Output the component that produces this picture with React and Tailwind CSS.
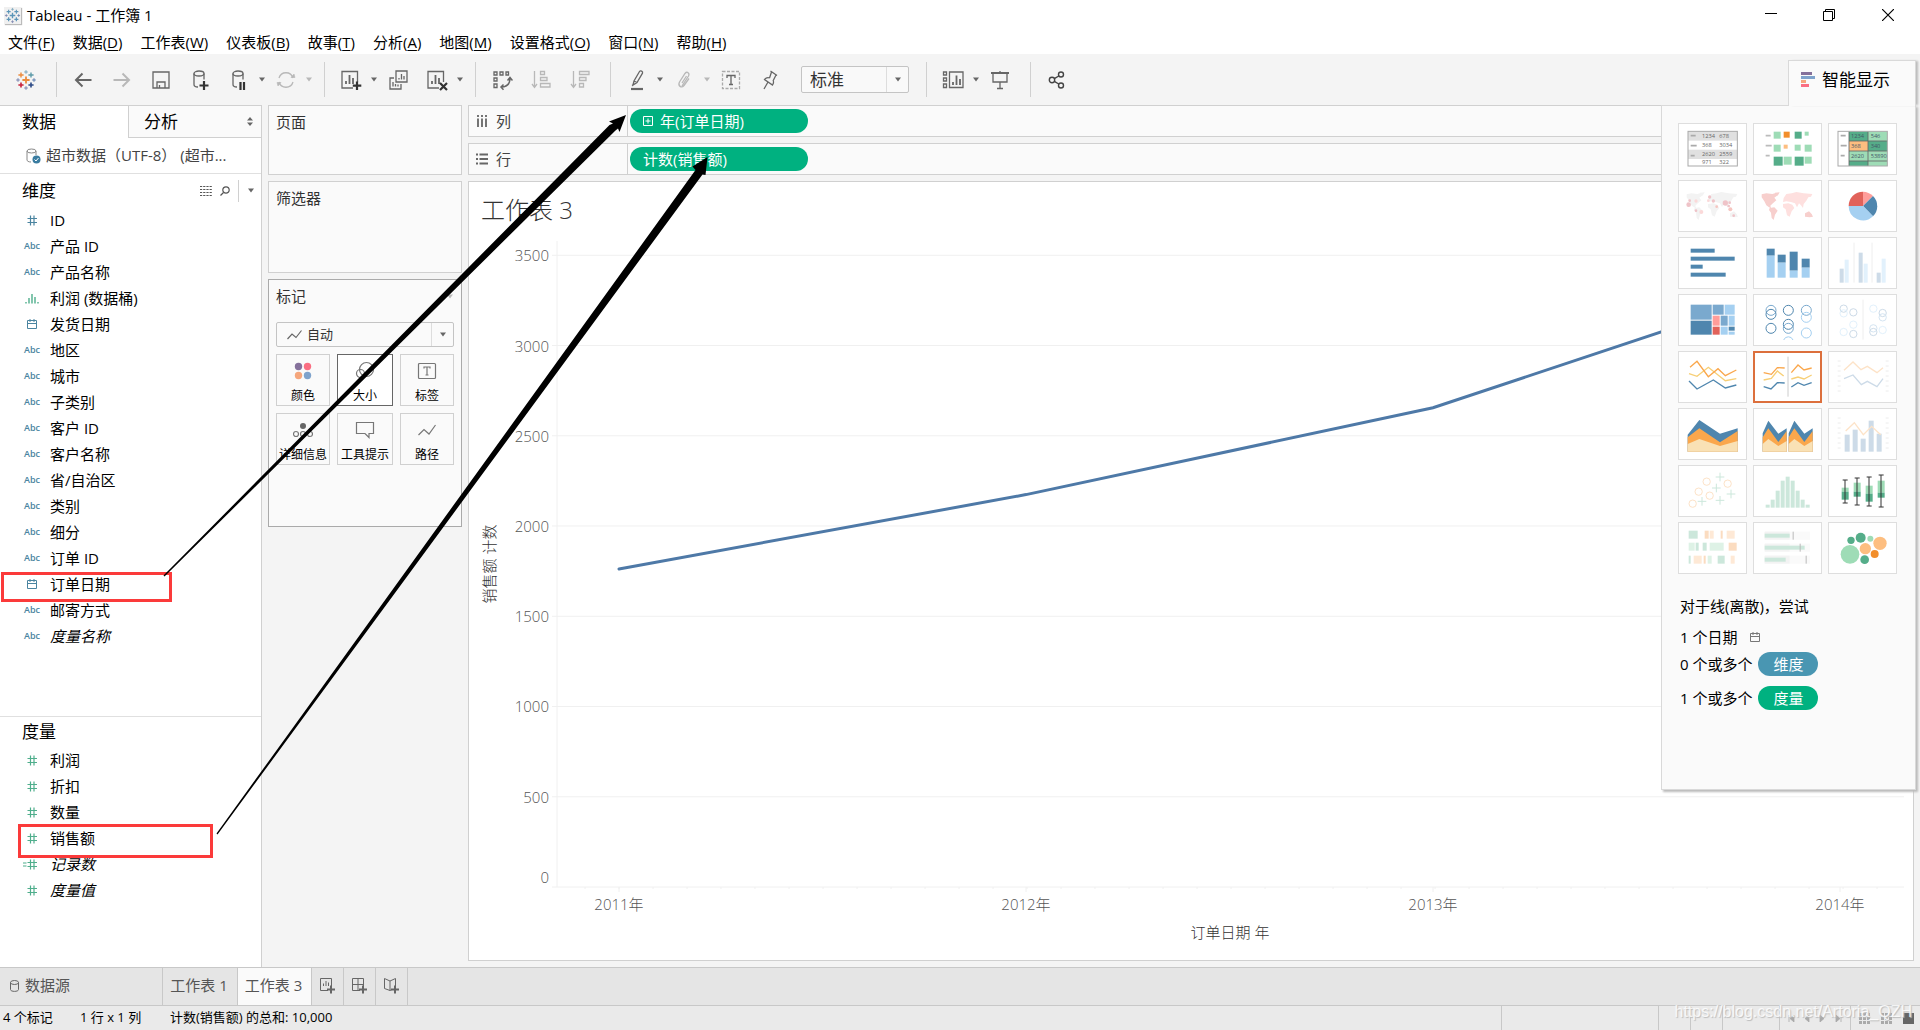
const menus = [
    ["文件", "F"], ["数据", "D"], ["工作表", "W"], ["仪表板", "B"], ["故事", "T"],
    ["分析", "A"], ["地图", "M"], ["设置格式", "O"], ["窗口", "N"], ["帮助", "H"],
];

const dimensions = [
    { type: "num", name: "ID" },
    { type: "abc", name: "产品 ID" },
    { type: "abc", name: "产品名称" },
    { type: "bin", name: "利润 (数据桶)" },
    { type: "date", name: "发货日期" },
    { type: "abc", name: "地区" },
    { type: "abc", name: "城市" },
    { type: "abc", name: "子类别" },
    { type: "abc", name: "客户 ID" },
    { type: "abc", name: "客户名称" },
    { type: "abc", name: "省/自治区" },
    { type: "abc", name: "类别" },
    { type: "abc", name: "细分" },
    { type: "abc", name: "订单 ID" },
    { type: "date", name: "订单日期" },
    { type: "abc", name: "邮寄方式" },
    { type: "abc", name: "度量名称", italic: true },
];

const measures = [
    { type: "num", name: "利润" },
    { type: "num", name: "折扣" },
    { type: "num", name: "数量" },
    { type: "num", name: "销售额" },
    { type: "calc", name: "记录数", italic: true },
    { type: "num", name: "度量值", italic: true },
];

/* ---------- small helpers ---------- */

const Caret = ({ className = "text-[#666]" }) => (
    <svg className={`${className} shrink-0`} width="8" height="5" viewBox="0 0 8 5">
        <path d="M1 0.5h6L4 4.5z" fill="currentColor" />
    </svg>
);

const ToolButton = ({ label, dim, children }) => (
    <button
        type="button"
        aria-label={label}
        className={`flex w-[39px] shrink-0 items-center justify-center ${dim ? "text-[#b8b8b8]" : "text-[#666]"}`}
    >
        <svg width="22" height="22" viewBox="0 0 22 22" fill="none" stroke="currentColor" strokeWidth="1.3">
            {children}
        </svg>
    </button>
);

const Separator = () => <span className="mr-1.5 ml-[11px] h-[35px] w-px shrink-0 bg-[#d0d0d0]" />;

const Plus = ({ x, y, r, c, w = 1.4 }) => (
    <path d={`M${x - r} ${y}h${r * 2}M${x} ${y - r}v${r * 2}`} stroke={c} strokeWidth={w} fill="none" />
);

const Logo = ({ blue }) => (
    <>
        <Plus x={11} y={11} r={3.6} c={blue ? "#5b95b8" : "#eb8a3c"} w={1.8} />
        <Plus x={6} y={6} r={2.6} c={blue ? "#5b95b8" : "#eb8a3c"} />
        <Plus x={16} y={6} r={2.6} c={blue ? "#5b95b8" : "#5c9aa8"} />
        <Plus x={6} y={16} r={2.6} c={blue ? "#5b95b8" : "#c8233d"} w={1.6} />
        <Plus x={16} y={16} r={2.6} c={blue ? "#5b95b8" : "#2c4a86"} w={1.6} />
        <Plus x={11} y={3} r={1.8} c="#7ba6bd" w={1} />
        <Plus x={11} y={19} r={1.8} c="#7b85b0" w={1} />
        <Plus x={3} y={11} r={1.8} c="#7b85b0" w={1} />
        <Plus x={19} y={11} r={1.8} c="#5f7fae" w={1} />
    </>
);

const SheetIcon = () => (
    <>
        <path d="M13 19H2V2.5h15.5V13" />
        <path d="M6 15v-3M9.5 15V6M13 15V9" strokeWidth="1.8" />
    </>
);

const Cylinder = () => (
    <>
        <ellipse cx="10" cy="4.5" rx="5" ry="2.5" />
        <path d="M5 4.5v11c0 1.5 1.8 2.5 4 2.5M15 4.5v6" />
    </>
);

/* ---------- toolbar ---------- */

const Toolbar = () => (
    <div className="flex h-[51px] items-center bg-[#f4f4f4] pl-1.5">
        <ToolButton label="起始页"><Logo /></ToolButton>
        <Separator />
        <ToolButton label="撤消"><path d="M19.5 11H4M10.5 4.500L4 11l6.500 6.500" strokeWidth="2" /></ToolButton>
        <ToolButton label="重做" dim><path d="M2.500 11H18M11.500 4.500L18 11l-6.500 6.500" strokeWidth="2" /></ToolButton>
        <ToolButton label="保存">
            <path d="M3 3h16v16H3zM7 19v-6h8v6M9.500 19v-3" />
        </ToolButton>
        <ToolButton label="新建数据源">
            <Cylinder />
            <path d="M15 12v9M10.500 16.500h9" stroke="#333" strokeWidth="2.200" />
        </ToolButton>
        <ToolButton label="暂停自动更新">
            <Cylinder />
            <path d="M12.500 13v8M16 13v8" stroke="#333" strokeWidth="2.200" />
        </ToolButton>
        <Caret />
        <ToolButton label="运行更新" dim>
            <path d="M4 9a7.300 7.300 0 0 1 14 0M18 13a7.300 7.300 0 0 1-14 0" />
            <path d="M16 8.500h4L19 5zM6 13.500H2L3 17z" fill="currentColor" strokeWidth="0.600" />
        </ToolButton>
        <Caret className="text-[#b8b8b8]" />
        <Separator />
        <ToolButton label="新建工作表">
            <SheetIcon />
            <path d="M17 12.500v8.500M12.800 16.700h8.500" stroke="#333" strokeWidth="2.200" />
        </ToolButton>
        <Caret />
        <ToolButton label="复制工作表">
            <path d="M9 2h11v11H9z M7 9H3v11h11v-5" />
            <path d="M12 10.500V9M14.500 10.500V5M17 10.500V7M6 17.500V13M8.500 17.500V15M11 17.500V15.500" />
        </ToolButton>
        <ToolButton label="清除工作表">
            <SheetIcon />
            <path d="M14 14l7 7M21 14l-7 7" stroke="#333" strokeWidth="2.200" />
        </ToolButton>
        <Caret />
        <Separator />
        <ToolButton label="交换行和列">
            <path d="M3 3h3v3H3zM9 3h3v3H9zM15 3h2.500v3H15zM3 9h3v3H3zM3 15h3v3.500H3z" />
            <path d="M19 9c0 6-3 9-9 9M16.500 11.500L19 8.500l2.500 3M12.500 15.500L10 18l2.500 2.800" strokeWidth="1.500" />
        </ToolButton>
        <ToolButton label="升序排序" dim>
            <path d="M4.500 2v15M2 15l2.500 3.500L7 15" />
            <path d="M10.500 2.500h4v3h-4zM10.500 8.500h6.500v3h-6.500zM10.500 14.500h9.500v3.500h-9.500z" />
        </ToolButton>
        <ToolButton label="降序排序" dim>
            <path d="M4.500 2v15M2 15l2.500 3.500L7 15" />
            <path d="M10.500 2.500h9.500v3h-9.500zM10.500 8.500h6.500v3h-6.500zM10.500 14.500h4v3.500h-4z" />
        </ToolButton>
        <Separator />
        <ToolButton label="突出显示">
            <path d="M7 16l1-4 5.500-9.500c1-1.500 3.700 0 3 1.700L11 13.500zM8 12l3 1.500M6 16.500l1.500-1" />
            <path d="M5 20h12" strokeWidth="2.200" />
        </ToolButton>
        <Caret />
        <ToolButton label="组成员" dim>
            <path d="M9 17l6.500-10c1.500-3-1.500-5-3.500-2.500L6.500 13c-2 4 2 6.500 4.500 3.500l5-7M9 14l4.500-7" />
        </ToolButton>
        <Caret className="text-[#b8b8b8]" />
        <ToolButton label="显示标记标签">
            <rect x="2.500" y="2.500" width="17" height="17" stroke="#aaa" strokeDasharray="3 1.500" />
            <path d="M7 9V6.500h8V9M11 6.500v9M9 15.500h4" />
        </ToolButton>
        <ToolButton label="固定轴">
            <path d="M11.500 2l6.500 4.500M12.500 3L10.500 9M17 6L14 12M10.500 9c-1.500-1-4 0-5 1.500L13.500 16c1-1.500 1.500-3.500.500-4M9 13l-4 7" />
        </ToolButton>
        <div className="relative ml-3 h-[27px] w-[108px] shrink-0">
            <select
                aria-label="视图适合方式"
                className="h-full w-full appearance-none rounded-xs border border-[#c4c4c4] bg-[#f9f9f9] pl-2 text-[17px] leading-6 text-[#333]"
            >
                <option>标准</option>
                <option>整个视图</option>
            </select>
            <span className="pointer-events-none absolute inset-y-px right-px flex w-[22px] items-center justify-center border-l border-[#ddd]">
                <Caret />
            </span>
        </div>
        <span className="w-1.5" />
        <Separator />
        <ToolButton label="显示/隐藏卡">
            <path d="M1.500 3h3v3h-3zM1.500 9h3v3h-3zM1.500 15h3v3.500h-3zM7.500 3H21v15.500H7.500z" />
            <path d="M11 16v-3M14.500 16V6.500M18 16v-6" strokeWidth="1.800" />
        </ToolButton>
        <Caret />
        <ToolButton label="演示模式">
            <path d="M2 4h18" strokeWidth="2" />
            <path d="M4 4v9h14V4M11 2v2M11 13v6M8 19.500h6" />
        </ToolButton>
        <Separator />
        <ToolButton label="共享">
            <g stroke="#444" strokeWidth="1.400">
                <circle cx="6" cy="11" r="2.700" />
                <circle cx="15" cy="5.500" r="2.500" />
                <circle cx="15" cy="16.500" r="2.500" />
                <path d="M8.300 9.700l4.500-2.700M8.300 12.300l4.500 2.700" />
            </g>
        </ToolButton>
    </div>
);

/* ---------- data pane ---------- */

const CalendarIcon = ({ className }) => (
    <svg className={className} width="12" height="12" viewBox="0 0 12 12" fill="none" stroke="currentColor">
        <path d="M1.500 2.500h9v8h-9zM1 5.500h10M4 1v3M8 1v3" />
    </svg>
);

const FieldIcon = ({ type }) => {
    if (type === "abc") {
        return <span className="text-[9px] font-semibold text-[#4a84a0]">Abc</span>;
    }
    if (type === "date") return <CalendarIcon className="text-[#4a84a0]" />;
    if (type === "bin") {
        return (
            <svg width="14" height="11" viewBox="0 0 14 11" stroke="#4fae8c" strokeWidth="1.400">
                <path d="M1 10.500V9M4 10.500V5M7 10.500V1M10 10.500V4M13 10.500V9" />
            </svg>
        );
    }
    return (
        <svg width="18" height="11" viewBox="0 0 18 11" fill="none" strokeWidth="1.200" stroke="currentColor">
            <path d="M7.500 0.500v10M11 0.500v10M4.500 3.500h9.500M4.500 7.500h9.500" />
            {type === "calc" && <path d="M0 4h3.500M0 7h3.500" />}
        </svg>
    );
};

const FieldList = ({ items, iconClass }) => (
    <ul>
        {items.map((f) => (
            <li key={f.name} className="flex h-[26px] items-center text-[15px] text-black">
                <span className={`flex w-[50px] justify-center pl-3.5 ${iconClass}`}>
                    <span className="flex w-5 justify-center"><FieldIcon type={f.type} /></span>
                </span>
                <span className={f.italic ? "italic" : ""}>{f.name}</span>
            </li>
        ))}
    </ul>
);

const DataPane = () => (
    <aside className="flex w-[262px] shrink-0 flex-col border-t border-r border-[#d0d0d0] bg-white">
        <div className="flex h-8 text-[17px] text-black">
            <button type="button" className="w-[128px] pl-[22px] text-left">数据</button>
            <button type="button" className="flex flex-1 items-center justify-between border-b border-l border-[#d0d0d0] bg-[#fafafa] pr-2 pl-[15px]">
                分析
                <svg width="6" height="9" viewBox="0 0 6 9" fill="#666"><path d="M0 3.500h6L3 0zM0 5.500h6L3 9z" /></svg>
            </button>
        </div>
        <button type="button" className="flex h-9 items-center gap-[5px] border-b border-[#e0e0e0] pl-[26px] text-[15px] whitespace-pre text-[#444]">
            <svg width="15" height="16" viewBox="0 0 15 16" fill="none" stroke="#888">
                <ellipse cx="5.500" cy="3" rx="4.500" ry="2" />
                <path d="M1 3v9c0 1 1.500 2 4 2M10 3v4" />
                <circle cx="10.500" cy="11.500" r="4" fill="#3a7ca0" stroke="none" />
                <path d="M8.500 11.500l1.500 1.500 2.500-3" stroke="#fff" />
            </svg>
            超市数据（UTF-8） (超市...
        </button>
        <div className="flex h-[33px] items-center pl-[22px]">
            <h2 className="flex-1 text-[17px] text-black">维度</h2>
            <button type="button" aria-label="查看数据" className="mr-2">
                <svg width="12" height="10" viewBox="0 0 12 10" stroke="#555">
                    <path d="M0 .5h12M0 3.500h12M0 6.500h12M0 9.500h12" strokeDasharray="2.200 1" />
                </svg>
            </button>
            <button type="button" aria-label="查找字段" className="mr-2">
                <svg width="10" height="10" viewBox="0 0 10 10" fill="none" stroke="#555" strokeWidth="1.200">
                    <circle cx="6" cy="4" r="3.200" /><path d="M3.500 6.500L.5 9.500" />
                </svg>
            </button>
            <button type="button" aria-label="维度菜单" className="flex h-[22px] items-center border-l border-[#d0d0d0] pr-1.5 pl-2"><Caret /></button>
        </div>
        <div className="h-[510px] border-b border-[#e0e0e0]">
            <FieldList items={dimensions} iconClass="text-[#4a84a0]" />
        </div>
        <h2 className="flex h-[30px] items-center pl-[22px] text-[17px] text-black">度量</h2>
        <FieldList items={measures} iconClass="text-[#4fae8c]" />
    </aside>
);

/* ---------- cards ---------- */

const markButtons = [
    {
        name: "颜色",
        icon: (
            <g stroke="none">
                <circle cx="5.500" cy="5.500" r="3.700" fill="#85719b" />
                <circle cx="14.500" cy="5.500" r="3.700" fill="#fa6e82" />
                <circle cx="5.500" cy="14.500" r="3.700" fill="#f5a67c" />
                <circle cx="14.500" cy="14.500" r="3.700" fill="#7fa3cc" />
            </g>
        ),
    },
    {
        name: "大小",
        active: true,
        icon: <><circle cx="11.500" cy="8.500" r="7" /><circle cx="5.500" cy="12.500" r="4" /></>,
    },
    {
        name: "标签",
        icon: <><rect x="1.500" y="2.500" width="17" height="15" rx="1" /><path d="M7 7.500V6h6v1.500M10 6v8M8.500 14h3" /></>,
    },
    {
        name: "详细信息",
        icon: (
            <>
                <circle cx="10" cy="6" r="3" fill="#666" stroke="none" />
                <circle cx="3" cy="14" r="2.500" /><circle cx="10" cy="14" r="2.500" /><circle cx="17" cy="14" r="2.500" />
            </>
        ),
    },
    { name: "工具提示", icon: <path d="M1.500 2.500h17v11H14v4l-4-4H1.500z" /> },
    { name: "路径", icon: <path d="M1.500 15l5.500-5.500 5 4.500 6.500-9" /> },
];

const Cards = () => (
    <div className="flex w-[194px] shrink-0 flex-col gap-1.5 text-[15px] text-[#333]">
        <section className="h-[70px] border border-[#d0d0d0] bg-[#fafafa] px-[7px] py-[5px]"><h3>页面</h3></section>
        <section className="h-[92px] border border-[#d0d0d0] bg-[#fafafa] px-[7px] py-[5px]"><h3>筛选器</h3></section>
        <section className="h-[248px] border border-[#aaa] bg-[#fafafa] px-[7px] py-[5px]">
            <div className="flex items-center justify-between">
                <h3>标记</h3>
                <Caret className="text-[#bbb]" />
            </div>
            <div className="relative mt-3.5">
                <select
                    aria-label="标记类型"
                    className="h-[25px] w-full appearance-none rounded-xs border border-[#c4c4c4] bg-[#fafafa] pl-[30px] text-[13px] text-[#333]"
                >
                    <option>自动</option>
                    <option>线</option>
                </select>
                <svg className="pointer-events-none absolute top-2 left-[11px]" width="15" height="10" viewBox="0 0 15 10" fill="none" stroke="#666" strokeWidth="1.200">
                    <path d="M.5 9l4.500-5 4 3.500L14.500.5" />
                </svg>
                <span className="pointer-events-none absolute inset-y-px right-px flex w-[22px] items-center justify-center border-l border-[#ddd]">
                    <Caret />
                </span>
            </div>
            <div className="mt-[7px] grid grid-cols-[54px_56px_54px] justify-between gap-y-[7px]">
                {markButtons.map((m) => (
                    <button
                        key={m.name}
                        type="button"
                        className={`flex h-[52px] flex-col items-center justify-between border pt-1.5 text-[12px] leading-[18px] whitespace-nowrap text-black ${m.active ? "border-[#666] bg-white" : "border-[#d0d0d0] bg-[#fafafa]"}`}
                    >
                        <svg width="20" height="20" viewBox="0 0 20 20" fill="none" stroke="#777" strokeWidth="1.200">{m.icon}</svg>
                        {m.name}
                    </button>
                ))}
            </div>
        </section>
    </div>
);

/* ---------- shelves and chart ---------- */

const Shelf = ({ name, icon, children }) => (
    <div className="flex h-8 border border-[#d0d0d0] bg-[#fafafa]">
        <div className="flex w-[159px] items-center gap-2 border-r border-[#d0d0d0] pl-[7px] text-[15px] text-[#444]">
            <svg width="12" height="12" viewBox="0 0 12 12" stroke="#666" strokeWidth="1.800">{icon}</svg>
            {name}
        </div>
        <button type="button" className="my-[3px] ml-[2px] flex h-6 w-[178px] items-center gap-[7px] rounded-full bg-[#00b180] pl-[13px] text-[15px] text-white">
            {children}
        </button>
    </div>
);

const W = 1444;
const H = 723;
const px = (x) => `${(x / W) * 100}%`;
const py = (y) => `${(y / H) * 100}%`;
const base = 650;
const valueY = (v) => base - v * 0.1805;
const yearX = (i) => 150 + i * 407;

const points = [1762, 2174, 2655, 3405];
const ticks = Array.from({ length: 39 }, (_, i) => 116 + i * 34).filter((x) => x < 1435);

const Chart = () => (
    <svg className="min-h-0 w-full flex-1 font-['Open_Sans','Noto_Sans_CJK_SC',sans-serif] text-[15px] font-light" role="img" aria-label="销售额 计数">
        <g stroke="#f0f0f0">
            {[500, 1000, 1500, 2000, 2500, 3000, 3500].map((v) => (
                <line key={v} x1={px(83)} x2={px(1435)} y1={py(valueY(v))} y2={py(valueY(v))} />
            ))}
            <line x1={px(83)} x2={px(1435)} y1={py(base)} y2={py(base)} />
            <line x1={px(88)} x2={px(88)} y1={py(4)} y2={py(base)} />
            {ticks.map((x) => (
                <line key={x} x1={px(x)} x2={px(x)} y1={py(base)} y2={py(base + 2)} />
            ))}
            {points.map((_, i) => (
                <line key={i} x1={px(yearX(i))} x2={px(yearX(i))} y1={py(base)} y2={py(base + 5)} />
            ))}
        </g>
        <g fill="#555" textAnchor="end">
            {[500, 1000, 1500, 2000, 2500, 3000, 3500].map((v) => (
                <text key={v} x={px(80)} y={py(valueY(v) + 6)}>{v}</text>
            ))}
            <text x={px(80)} y={py(646)}>0</text>
        </g>
        <g fill="#555" textAnchor="middle">
            {points.map((_, i) => (
                <text key={i} x={px(yearX(i))} y={py(673)}>{2011 + i}年</text>
            ))}
        </g>
        <text x={px(761)} y={py(701)} textAnchor="middle" fill="#333">订单日期 年</text>
        <svg x={px(26)} y={py(327)} overflow="visible">
            <text transform="rotate(-90)" textAnchor="middle" fill="#333">销售额 计数</text>
        </svg>
        <svg viewBox={`0 0 ${W} ${H}`} preserveAspectRatio="none" width="100%" height="100%">
            <polyline
                points={points.map((v, i) => `${yearX(i)},${valueY(v)}`).join(" ")}
                fill="none"
                stroke="#4e79a7"
                strokeWidth="3"
                strokeLinecap="round"
                vectorEffect="non-scaling-stroke"
            />
        </svg>
    </svg>
);

const Worksheet = () => (
    <main className="flex min-w-0 flex-1 flex-col gap-1.5">
        <Shelf name="列" icon={<path d="M2 3.500V12M6 3.500V12M10 3.500V12M2 0v2M6 0v2M10 0v2" />}>
            <svg width="10" height="10" viewBox="0 0 10 10" fill="none" stroke="#fff"><path d="M.5.5h9v9h-9zM2.500 5h5M5 2.500v5" /></svg>
            年(订单日期)
        </Shelf>
        <Shelf name="行" icon={<path d="M3.500 1.500H12M3.500 6H12M3.500 10.500H12M0 1.500h2M0 6h2M0 10.500h2" />}>计数(销售额)</Shelf>
        <section className="flex flex-1 flex-col border border-[#d0d0d0] bg-white">
            <h1 className="h-[55px] pt-2.5 pl-3 font-['Open_Sans','Noto_Sans_CJK_SC',sans-serif] text-[24px] leading-9 font-light text-[#333]">工作表 3</h1>
            <Chart />
        </section>
    </main>
);

/* ---------- show me ---------- */

const R = ({ x, y, w, h, c }) => <rect x={x} y={y} width={w} height={h} fill={c} />;
const L = ({ p, c, w = 4 }) => <polyline points={p} stroke={c} strokeWidth={w} fill="none" />;
const Rings = ({ list, r = 15 }) => list.map(([cx, cy, c]) => (
    <circle key={`${cx}-${cy}`} cx={cx} cy={cy} r={r} fill="none" stroke={c} strokeWidth="3" />
));

const navy = "#4f86ae";
const mid = "#7aa9ce";
const sky = "#a5d0f1";
const green = "#55ad89";
const mint = "#9edcb6";
const orange = "#faa74c";
const peach = "#fdbe80";

const World = ({ west, east }) => (
    <>
        <path fill={west} d="M26 43l14-3 18 2 10-3 4 8-8 6 6 8-12 10-6 6 2 8-6-3-8-6-6-12-8-12zM66 38l14-1-6 10-8-3zM50 84l14-2 10 10-8 12-4 16-6-6-2-16-6-8z" />
        <path fill={east} d="M92 54l8-12 16-2 14-4 22 4 26 2-4 8-8 2-6 10-8 10-2 12-6-8-6-6-6 12-6-12-12-4-14-2-10 2zM90 72l16-2 12 4 6 10-8 10-6 16-8-4-4-18-8-6z" />
        <path fill={west} d="M156 100l12-6 8 8 4 8-10 2-14-2z" />
    </>
);

const Areas = ({ b, o, y }) => (
    <>
        <polygon points={b} fill={navy} />
        <polygon points={o} fill={orange} />
        <polygon points={y} fill="#f9e1b5" />
    </>
);

const SideTicks = () => (
    <path d="M29 30h9M29 45h9M29 60h9M29 75h9M29 90h9M29 105h9M29 120h9M173 30h9M173 45h9M173 60h9M173 75h9M173 90h9M173 105h9M173 120h9" stroke="#ececec" strokeWidth="3" />
);

const thumbs = [
    {
        name: "文本表",
        art: (
            <>
                <rect x="30" y="25" width="148" height="104" fill="#fff" />
                <R x={30} y={25} w={148} h={28} c="#e0e0e0" />
                <R x={30} y={80} w={148} h={28} c="#e0e0e0" />
                <rect x="30" y="25" width="148" height="104" fill="none" stroke="#a9a9a9" strokeWidth="3" />
                <path d="M38 38h15M38 68h18M38 98h12" stroke="#aaa" strokeWidth="5" />
                <g fill="#666" fontSize="17">
                    <text x="72" y="45">1234</text><text x="124" y="45">678</text>
                    <text x="72" y="73">368</text><text x="124" y="73">3034</text>
                    <text x="72" y="100">2620</text><text x="124" y="100">2559</text>
                    <text x="72" y="124">971</text><text x="124" y="124">322</text>
                </g>
            </>
        ),
    },
    {
        name: "压力图",
        art: (
            <>
                <path d="M38 38h15M38 68h18M38 98h12" stroke="#bbb" strokeWidth="5" />
                <R x={62} y={26} w={21} h={21} c={mint} /><R x={92} y={26} w={18} h={18} c="#f28e2b" />
                <R x={125} y={26} w={21} h={21} c={green} /><R x={155} y={26} w={12} h={12} c={mint} />
                <R x={62} y={65} w={21} h={21} c={mint} /><R x={92} y={65} w={12} h={12} c={peach} />
                <R x={125} y={65} w={18} h={18} c={mint} /><R x={155} y={65} w={21} h={21} c={mint} />
                <R x={62} y={101} w={27} h={27} c={green} /><R x={92} y={101} w={24} h={24} c={mint} />
                <R x={125} y={101} w={27} h={27} c={green} /><R x={155} y={101} w={21} h={21} c={mint} />
            </>
        ),
    },
    {
        name: "突出显示表",
        art: (
            <>
                <R x={30} y={25} w={148} h={104} c="#fff" />
                <R x={63} y={25} w={57} h={29} c={green} /><R x={120} y={25} w={58} h={29} c={mint} />
                <R x={63} y={54} w={57} h={30} c={peach} /><R x={120} y={54} w={58} h={30} c={green} />
                <R x={63} y={84} w={115} h={30} c={mint} />
                <R x={63} y={114} w={57} h={15} c={green} /><R x={120} y={114} w={58} h={15} c={mint} />
                <path d="M63 25v104M120 25v104M63 54h115M63 84h115M63 114h115" stroke="#666" strokeWidth="2.500" />
                <rect x="30" y="25" width="148" height="104" fill="none" stroke="#aaa" strokeWidth="3" />
                <path d="M38 38h15M38 68h18M38 98h12" stroke="#aaa" strokeWidth="5" />
                <g fill="#456" fontSize="17">
                    <text x="69" y="44">1234</text><text x="128" y="44">546</text>
                    <text x="69" y="75">368</text><text x="128" y="75">340</text>
                    <text x="69" y="105">2620</text><text x="128" y="105">53890</text>
                </g>
            </>
        ),
    },
    {
        name: "符号地图",
        art: (
            <>
                <World west="#f3f3f3" east="#f3f3f3" />
                <g fill="#efc3c8">
                    <circle cx="32" cy="74" r="7" /><circle cx="35" cy="62" r="4" /><circle cx="54" cy="63" r="5" fill="#fbd9d9" />
                    <circle cx="95" cy="51" r="5" /><circle cx="106" cy="63" r="5" /><circle cx="91" cy="62" r="4" fill="#fbd9d9" />
                    <circle cx="142" cy="69" r="8" /><circle cx="155" cy="68" r="4" /><circle cx="152" cy="78" r="4" />
                    <circle cx="157" cy="88" r="6" fill="#f6c5c0" /><circle cx="54" cy="92" r="4" /><circle cx="70" cy="96" r="6" fill="#fbd9d9" />
                    <circle cx="116" cy="80" r="4" fill="#f6c5c0" /><circle cx="167" cy="107" r="4" />
                </g>
            </>
        ),
    },
    { name: "地图", art: <World west="#f7cfcd" east="#fee0df" /> },
    {
        name: "饼图",
        art: (
            <>
                <path d="M105 78V35a43 43 0 0 1 30 13z" fill="#ff9d9a" />
                <path d="M105 78l30-30a43 43 0 0 1 0 61z" fill={navy} />
                <path d="M105 78l30 31A43 43 0 0 1 62 78z" fill={sky} />
                <path d="M105 78H62a43 43 0 0 1 43-43z" fill="#e1625a" />
            </>
        ),
    },
    {
        name: "水平条",
        art: <><R x={38} y={35} w={72} h={12} c={navy} /><R x={38} y={59} w={132} h={12} c={navy} /><R x={38} y={83} w={36} h={12} c={navy} /><R x={38} y={107} w={105} h={12} c={navy} /></>,
    },
    {
        name: "堆叠条",
        art: [[41, 35, 56], [74, 53, 77], [110, 44, 101], [146, 65, 92]].map(([x, a, b]) => (
            <g key={x}><R x={x} y={a} w={24} h={b - a} c={navy} /><R x={x} y={b} w={24} h={122 - b} c={sky} /></g>
        )),
    },
    {
        name: "并排条",
        art: (
            <>
                <path d="M78 17v120M132 17v120" stroke="#eee" strokeWidth="3" />
                {[[35, 95], [92, 47], [146, 107]].map(([x, y]) => <R key={x} x={x} y={y} w={12} h={137 - y} c="#cddbe8" />)}
                {[[50, 68], [107, 80], [161, 65]].map(([x, y]) => <R key={x} x={x} y={y} w={12} h={137 - y} c="#e2f1fc" />)}
            </>
        ),
    },
    {
        name: "树状图",
        art: (
            <>
                <R x={38} y={32} w={63} h={45} c={mid} /><R x={38} y={80} w={63} h={42} c={navy} />
                <R x={104} y={32} w={33} h={30} c={mid} /><R x={140} y={32} w={30} h={30} c={sky} />
                <R x={104} y={65} w={21} h={30} c="#ff9d9a" /><R x={128} y={65} w={21} h={30} c={mid} /><R x={152} y={65} w={18} h={30} c={sky} />
                <R x={104} y={98} w={21} h={24} c="#e1625a" /><R x={128} y={98} w={21} h={24} c={sky} />
                <R x={152} y={98} w={18} h={12} c={navy} /><R x={152} y={113} w={18} h={9} c={sky} />
            </>
        ),
    },
    {
        name: "圆视图",
        art: (
            <>
                <Rings list={[[54, 49, mid], [54, 61, navy], [54, 103, navy], [106, 49, navy], [106, 91, navy], [106, 103, mid], [160, 49, mid], [160, 70, sky], [160, 117, sky]]} />
                <path d="M92 138a15 15 0 0 1 28 0" fill="none" stroke={sky} strokeWidth="3" />
            </>
        ),
    },
    {
        name: "并排圆",
        art: (
            <>
                <path d="M105 17v120" stroke="#eee" strokeWidth="3" />
                <Rings r={11} list={[[47, 44, "#cddbe8"], [47, 58, "#e2f1fc"], [76, 55, "#cddbe8"], [76, 92, "#e2f1fc"], [47, 114, "#e2f1fc"], [76, 120, "#cddbe8"], [136, 44, "#e2f1fc"], [164, 57, "#cddbe8"], [164, 70, "#d5e5f2"], [136, 103, "#d5e5f2"], [136, 114, "#cddbe8"], [164, 108, "#e2f1fc"]]} />
            </>
        ),
    },
    {
        name: "线(连续)",
        art: <><L p="33,68 57,76 91,49 142,89 175,83" c="#f7cf76" /><L p="36,49 57,31 91,77 120,53 142,74 175,57" c={orange} /><L p="33,90 57,114 106,87 142,111 175,102" c={navy} /></>,
    },
    {
        name: "线(离散)",
        selected: true,
        art: (
            <>
                <path d="M105 17v120" stroke="#ccc" strokeWidth="3" />
                <L p="32,65 55,70 73,50 95,51" c={orange} /><L p="115,65 135,42 153,57 176,51" c={orange} />
                <L p="32,87 55,82 73,60 92,75" c="#f7cf76" /><L p="115,84 135,78 153,84 176,72" c="#f7cf76" />
                <L p="32,107 54,114 73,95 95,96" c={navy} /><L p="115,108 135,95 153,103 176,95" c={navy} />
            </>
        ),
    },
    {
        name: "双线",
        art: <><SideTicks /><L p="48,58 75,33 99,56 118,46 147,65 165,50" c="#fde3c8" /><L p="48,83 75,72 100,101 118,91 147,107 165,83" c="#cddbe8" /></>,
    },
    {
        name: "区域(连续)",
        art: <Areas b="29,80 64,36 126,77 179,61 179,131 29,131" o="29,88 64,61 126,103 179,69 179,131 29,131" y="29,108 64,93 126,114 179,99 179,131 29,131" />,
    },
    {
        name: "区域(离散)",
        art: (
            <>
                <Areas b="29,76 46,38 76,77 101,61 101,131 29,131" o="29,88 46,61 76,102 101,69 101,131 29,131" y="29,108 46,93 76,114 101,99 101,131 29,131" />
                <Areas b="107,76 124,38 154,77 179,61 179,131 107,131" o="107,88 124,61 154,102 179,69 179,131 107,131" y="107,108 124,93 154,114 179,99 179,131 107,131" />
            </>
        ),
    },
    {
        name: "双组合",
        art: (
            <>
                <SideTicks />
                {[[50, 80], [74, 65], [98, 92], [122, 38], [146, 77]].map(([x, y]) => <R key={x} x={x} y={y} w={15} h={131 - y} c="#cddbe8" />)}
                <L p="53,69 79,44 106,80 131,55 158,80" c="#fde3c8" />
            </>
        ),
    },
    {
        name: "散点图",
        art: (
            <>
                <Rings r={11} list={[[86, 50, "#fde3c8"], [149, 56, "#fde3c8"], [62, 80, "#fde3c8"], [95, 92, "#fde3c8"], [44, 116, "#fde3c8"]]} />
                {[[126, 36], [115, 69], [72, 109], [126, 106], [159, 87]].map(([x, y]) => <Plus key={`${x}-${y}`} x={x} y={y} r={13} c="#cce7db" w={3} />)}
            </>
        ),
    },
    {
        name: "直方图",
        art: [119, 104, 77, 47, 35, 47, 77, 104, 119].map((y, i) => <R key={i} x={38 + i * 15} y={y} w={12} h={128 - y} c="#cce7db" />),
    },
    {
        name: "盒须图",
        art: [[51, 45, 68, 80, 104, 114], [87, 39, 53, 80, 95, 120], [123, 36, 62, 86, 110, 123], [159, 30, 47, 83, 98, 126]].map(([x, a, b, c, d, e]) => (
            <g key={x}>
                <R x={x - 10} y={b} w={21} h={c - b} c={mint} />
                <R x={x - 10} y={c} w={21} h={d - c} c={green} />
                <path d={`M${x} ${a}V${e}M${x - 7} ${a}h15M${x - 7} ${e}h15`} stroke="#333" strokeWidth="3" />
            </g>
        )),
    },
    {
        name: "甘特图",
        art: (
            <>
                {[[32, 26, 27], [53, 62, 9], [74, 62, 12], [32, 101, 6], [119, 101, 21]].map(([x, y, w]) => <R key={`${x}-${y}`} x={x} y={y} w={w} h={24} c="#cce7db" />)}
                {[[32, 62, 18], [95, 62, 42], [89, 101, 12]].map(([x, y, w]) => <R key={`${x}-${y}`} x={x} y={y} w={w} h={24} c="#def2e6" />)}
                {[[80, 26, 12], [128, 26, 6], [152, 62, 24], [77, 101, 6]].map(([x, y, w]) => <R key={`${x}-${y}`} x={x} y={y} w={w} h={24} c="#fbdcc0" />)}
                {[[95, 26, 12], [146, 26, 24], [47, 101, 24], [158, 101, 12]].map(([x, y, w]) => <R key={`${x}-${y}`} x={x} y={y} w={w} h={24} c="#fee9d6" />)}
            </>
        ),
    },
    {
        name: "靶心图",
        art: [[29, 75, 120], [65, 120, 141], [101, 63, 159]].map(([y, w, m]) => (
            <g key={y}>
                <R x={35} y={y} w={136} h={24} c="#fafafa" />
                <R x={35} y={y} w={75} h={24} c="#f3f3f3" />
                <R x={35} y={y + 6} w={w} h={12} c="#cce7db" />
                <R x={m - 1} y={y} w={3} h={24} c="#bbb" />
            </g>
        )),
    },
    {
        name: "填充气泡图",
        art: (
            <>
                <circle cx="66" cy="97" r="28" fill={mint} /><circle cx="69" cy="55" r="11" fill={green} />
                <circle cx="98" cy="47" r="15" fill={green} /><circle cx="127" cy="50" r="9" fill={mint} />
                <circle cx="156" cy="64" r="20" fill={peach} /><circle cx="112" cy="80" r="17" fill={peach} />
                <circle cx="140" cy="96" r="12" fill="#f28e2b" /><circle cx="110" cy="113" r="13" fill={green} />
            </>
        ),
    },
];

const ShowMe = () => (
    <aside className="absolute top-[60px] right-1 w-[255px] text-[15px] text-black">
        <button type="button" className="relative z-10 ml-auto flex h-[46px] w-[128px] items-center gap-1.5 border border-b-0 border-[#d9d9d9] bg-[#fafafa] pb-2 pl-3 text-[17px] shadow-[3px_0_2px_-1px_#bbb]">
            <svg width="15" height="16" viewBox="0 0 15 16">
                <R x={0} y={0} w={11} h={3} c="#85719b" /><R x={0} y={4} w={14} h={3} c="#7fa3cc" />
                <R x={0} y={8} w={5} h={3} c="#f5a67c" /><R x={0} y={12} w={8} h={3} c="#fa6e82" />
            </svg>
            智能显示
        </button>
        <div className="-mt-px h-[685px] border border-[#d9d9d9] bg-[#fafafa] px-4 pt-[17px] shadow-[2px_2px_2px_#bbb]">
            <div className="grid grid-cols-[69px_69px_69px] gap-x-1.5 gap-y-[5px]">
                {thumbs.map((t) => (
                    <button
                        key={t.name}
                        type="button"
                        aria-label={t.name}
                        className={`h-[52px] bg-white ${t.selected ? "outline-2 -outline-offset-2 outline-[#dc6f3c]" : "outline-1 -outline-offset-1 outline-[#dedede]"}`}
                    >
                        <svg className="block h-full w-full" viewBox="0 0 207 156">{t.art}</svg>
                    </button>
                ))}
            </div>
            <div className="mt-5 flex flex-col px-0.5">
                <p className="h-7 leading-6">对于线(离散)，尝试</p>
                <p className="flex h-[30px] items-center gap-3">1 个日期 <CalendarIcon className="text-[#777]" /></p>
                <p className="flex h-[34px] items-start gap-1.5 leading-6">
                    0 个或多个
                    <span className="h-6 w-[60px] rounded-full bg-[#4996b2] text-center text-white">维度</span>
                </p>
                <p className="flex items-start gap-1.5 leading-6">
                    1 个或多个
                    <span className="h-6 w-[60px] rounded-full bg-[#00b180] text-center text-white">度量</span>
                </p>
            </div>
        </div>
    </aside>
);

/* ---------- bottom bars ---------- */

const newTabs = [
    { name: "新建工作表", d: "M9 13.500H1.500v-12h11V9M4.500 9V6.500M7 9V4M9.500 9V5.500" },
    { name: "新建仪表板", d: "M9 13.500H1.500v-12h11V9M1.500 7.500h11M7 1.500v12" },
    { name: "新建故事", d: "M9 12.500l-2 1-5.500-2v-10L7 4l5.500-2.500V9M7 4v9.500" },
];

const SheetTabs = () => (
    <nav className="flex h-[38px] shrink-0 border-t border-[#c8c8c8] bg-[#e5e5e5] pb-0.5 text-[15px] text-[#555]">
        <button type="button" className="-mb-0.5 flex w-[163px] items-center gap-1.5 border-r border-[#c8c8c8] pb-0.5 pl-2.5">
            <svg width="9" height="12" viewBox="0 0 9 12" fill="none" stroke="#666">
                <ellipse cx="4.500" cy="2.500" rx="4" ry="2" /><path d="M.5 2.500v7c0 2.500 8 2.500 8 0v-7" />
            </svg>
            数据源
        </button>
        <button type="button" className="-mb-0.5 w-[75px] border-r border-[#c8c8c8] pr-0.5 pb-0.5">工作表 1</button>
        <button type="button" className="-mb-0.5 w-[74px] border-r border-[#c8c8c8] bg-[#fafafa] pr-0.5 pb-0.5">工作表 3</button>
        {newTabs.map((t) => (
            <button key={t.name} type="button" aria-label={t.name} className="-mb-0.5 flex w-8 items-center justify-center border-r border-[#c8c8c8] pb-0.5">
                <svg width="17" height="17" viewBox="0 0 17 17" fill="none" stroke="#666">
                    <path d={t.d} />
                    <path d="M12 8.500v8M8 12.500h8" strokeWidth="2" />
                </svg>
            </button>
        ))}
    </nav>
);

const GridIcon = () => (
    <svg width="11" height="11" viewBox="0 0 11 11" fill="#aaa">
        <path d="M0 0h3v3H0zM4 0h3v3H4zM8 0h3v3H8zM0 4h3v3H0zM4 4h3v3H4zM8 4h3v3H8zM0 8h3v3H0zM4 8h3v3H4zM8 8h3v3H8z" />
    </svg>
);

const StatusBar = () => (
    <footer className="relative flex h-[25px] shrink-0 items-center border-t border-[#c8c8c8] bg-[#eaeaea] pl-[3px] text-[13px] text-black">
        <span className="w-[77px]">4 个标记</span>
        <span className="w-[90px]">1 行 x 1 列</span>
        <span className="flex-1">计数(销售额) 的总和: 10,000</span>
        <span className="h-full w-[157px] border-l border-[#c8c8c8]" />
        <span className="h-full w-8 border-l border-[#c8c8c8]" />
        <span className="h-full w-8 border-l border-[#c8c8c8]" />
        <span className="h-full w-[57px] border-l border-[#c8c8c8]" />
        <span className="flex h-full w-[71px] items-center justify-around border-l border-[#c8c8c8] px-1">
            {["M1 0v7M6 0v7L2 3.500z", "M5 0v7L1 3.500z", "M1 0v7l4-3.500z", "M6 0v7M1 0v7l4-3.500z"].map((d) => (
                <button key={d} type="button" aria-label="导航">
                    <svg width="7" height="7" viewBox="0 0 7 7" fill="#aaa" stroke="#aaa"><path d={d} strokeWidth=".8" /></svg>
                </button>
            ))}
        </span>
        <span className="flex h-full w-[70px] items-center gap-[11px] border-l border-[#c8c8c8] pl-2">
            <GridIcon />
            <GridIcon />
            <span className="size-[11px] bg-[#666]" />
        </span>
        <span className="absolute right-2 bottom-2 font-['Liberation_Sans',sans-serif] text-[16px] leading-5 text-white/80 [text-shadow:1px_1px_1px_#bbb]">
            https://blog.csdn.net/Artoria_QZH
        </span>
    </footer>
);

// hand-drawn markup that links the two fields to their shelves
const Annotations = () => (
    <svg className="pointer-events-none absolute top-0 left-0" width="800" height="900" viewBox="0 0 800 900" aria-hidden="true">
        <g fill="none" stroke="#fb3a3a" strokeWidth="3">
            <rect x="2.500" y="573.500" width="168" height="27" />
            <rect x="19.500" y="825.500" width="192" height="31" />
        </g>
        <path d="M163.500 575.500L609.500 125 613 123.500 609 121.500 626 115 619.500 132 618 128.500 615.500 130.500 164.500 576.500z" />
        <path d="M216.500 833.500L695.500 170 692.500 166.500 707.500 157 705.500 175 702.500 174.500 217.500 834.500z" />
    </svg>
);

const App = () => {
    return (
        <div className="relative flex min-h-screen flex-col overflow-hidden bg-[#f4f4f4] font-['Open_Sans','Noto_Sans_CJK_SC',sans-serif]">
            <header className="bg-white text-[15px] text-black">
                <div className="flex h-[30px] items-center gap-1.5 pl-1">
                    <svg className="bg-[#f0f0f0] shadow-[1px_1px_1px_#bbb]" width="17" height="17" viewBox="0 0 22 22"><Logo blue /></svg>
                    <span className="flex-1">Tableau - 工作簿 1</span>
                    <button type="button" aria-label="最小化" className="flex w-[58px] justify-center">
                        <svg width="12" height="12" viewBox="0 0 12 12" stroke="#000"><path d="M0 4.500h12" /></svg>
                    </button>
                    <button type="button" aria-label="还原" className="flex w-[46px] justify-center">
                        <svg width="12" height="12" viewBox="0 0 12 12" stroke="#000" fill="none"><path d="M.5 2.500h9v9h-9zM2.500 2.500v-2h9v9h-2" /></svg>
                    </button>
                    <button type="button" aria-label="关闭" className="mr-0.5 flex w-[60px] justify-center">
                        <svg width="12" height="12" viewBox="0 0 12 12" stroke="#000"><path d="M0 0l12 12M12 0L0 12" strokeWidth="1.200" /></svg>
                    </button>
                </div>
                <nav className="flex h-6 items-center gap-[18px] pl-2">
                    {menus.map(([name, key]) => (
                        <button key={key} type="button">
                            {name}(<span className="underline underline-offset-2">{key}</span>)
                        </button>
                    ))}
                </nav>
            </header>
            <Toolbar />
            <div className="flex flex-1">
                <DataPane />
                <div className="flex min-w-0 flex-1 gap-1.5 pr-1.5 pb-1.5 pl-1.5">
                    <Cards />
                    <Worksheet />
                </div>
            </div>
            <SheetTabs />
            <StatusBar />
            <ShowMe />
            <Annotations />
        </div>
    );
};

export default App;
